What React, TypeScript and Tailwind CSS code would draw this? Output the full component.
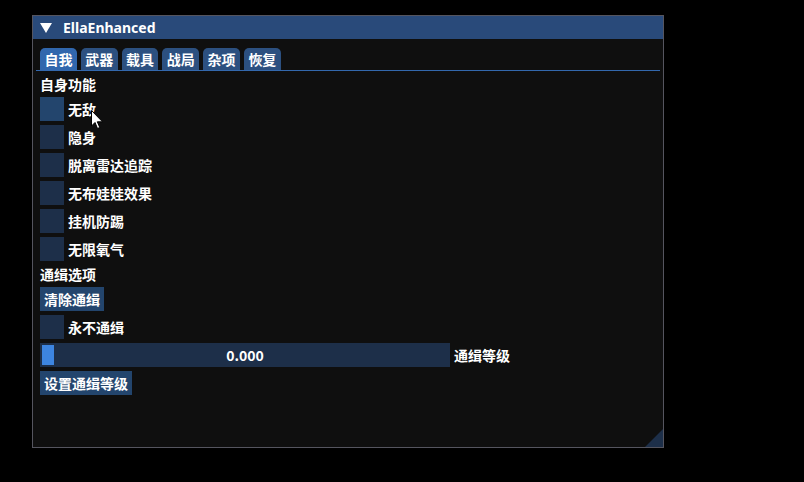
import React from "react";

const font = { fontFamily: '"Noto Sans CJK SC", "Noto Sans", sans-serif' };

const tabs = ["自我", "武器", "载具", "战局", "杂项", "恢复"];

function Checkbox({ label, hovered }: { label: string; hovered?: boolean }) {
  return (
    <div className="flex items-center gap-[4px] h-[24px]">
      <div
        className={`w-[24px] h-[24px] ${hovered ? "bg-[#23456d]" : "bg-[#1d2f49]"}`}
      />
      <span className="text-[14px] leading-[18px]">{label}</span>
    </div>
  );
}

function Button({ label }: { label: string }) {
  return (
    <div className="self-start h-[24px] px-[4px] flex items-center bg-[#23456d] text-[14px] leading-[18px]">
      {label}
    </div>
  );
}

export default function App() {
  return (
    <div
      className="w-[804px] h-[482px] bg-black relative pt-[15px] pl-[32px] text-white font-bold"
      style={font}
    >
      {/* Window */}
      <div className="w-[632px] h-[433px] border border-[#55555f] bg-[#0f0f0f] flex flex-col relative">
        {/* Title bar */}
        <div className="h-[23px] bg-[#294a7a] flex items-center pl-[7px] gap-[11px]">
          <svg width="12" height="10" viewBox="0 0 12 10">
            <polygon points="0,0 12,0 6,10" fill="#fff" />
          </svg>
          <span className="text-[14px] leading-[18px]" style={{ fontFamily: '"Noto Sans", sans-serif' }}>
            EllaEnhanced
          </span>
        </div>

        {/* Content */}
        <div className="flex flex-col px-[7px] pt-[9px]">
          {/* Tab bar */}
          <div className="flex gap-[4px]">
            {tabs.map((t, i) => (
              <div
                key={t}
                className={`w-[36.8px] h-[22px] rounded-t-[5px] flex items-center justify-center text-[14px] leading-[18px] ${
                  i === 0 ? "bg-[#3167ad]" : "bg-[#2c5080]"
                }`}
              >
                {t}
              </div>
            ))}
          </div>
          <div className="h-px bg-[#3368ad] -ml-[4px] mr-[-4px]" />

          <div className="flex flex-col gap-[4px] mt-[4px]">
            <div className="text-[14px] leading-[18px]">自身功能</div>
            <Checkbox label="无敌" hovered />
            <Checkbox label="隐身" />
            <Checkbox label="脱离雷达追踪" />
            <Checkbox label="无布娃娃效果" />
            <Checkbox label="挂机防踢" />
            <Checkbox label="无限氧气" />
            <div className="text-[14px] leading-[18px]">通缉选项</div>
            <Button label="清除通缉" />
            <Checkbox label="永不通缉" />
            {/* Slider */}
            <div className="flex items-center gap-[4px] h-[24px]">
              <div className="relative w-[410px] h-[24px] bg-[#1d2f49] flex items-center justify-center">
                <div className="absolute left-[2px] top-[2px] w-[12px] h-[20px] bg-[#3d85e0]" />
                <span className="text-[14px] leading-[18px]">0.000</span>
              </div>
              <span className="text-[14px] leading-[18px]">通缉等级</span>
            </div>
            <Button label="设置通缉等级" />
          </div>
        </div>

        {/* Resize grip */}
        <svg className="absolute right-0 bottom-0" width="18" height="18" viewBox="0 0 18 18">
          <polygon points="18,0 18,18 0,18" fill="#1d2f49" />
        </svg>
      </div>

      {/* Mouse cursor */}
      <svg className="absolute left-[91px] top-[110px]" width="13" height="20" viewBox="0 0 13 20">
        <path
          d="M0.5,0.5 L0.5,16 L4,12.5 L6.5,18.5 L8.8,17.5 L6.3,11.8 L11.5,11.8 Z"
          fill="#fff"
          stroke="#000"
          strokeWidth="1"
        />
      </svg>
    </div>
  );
}
